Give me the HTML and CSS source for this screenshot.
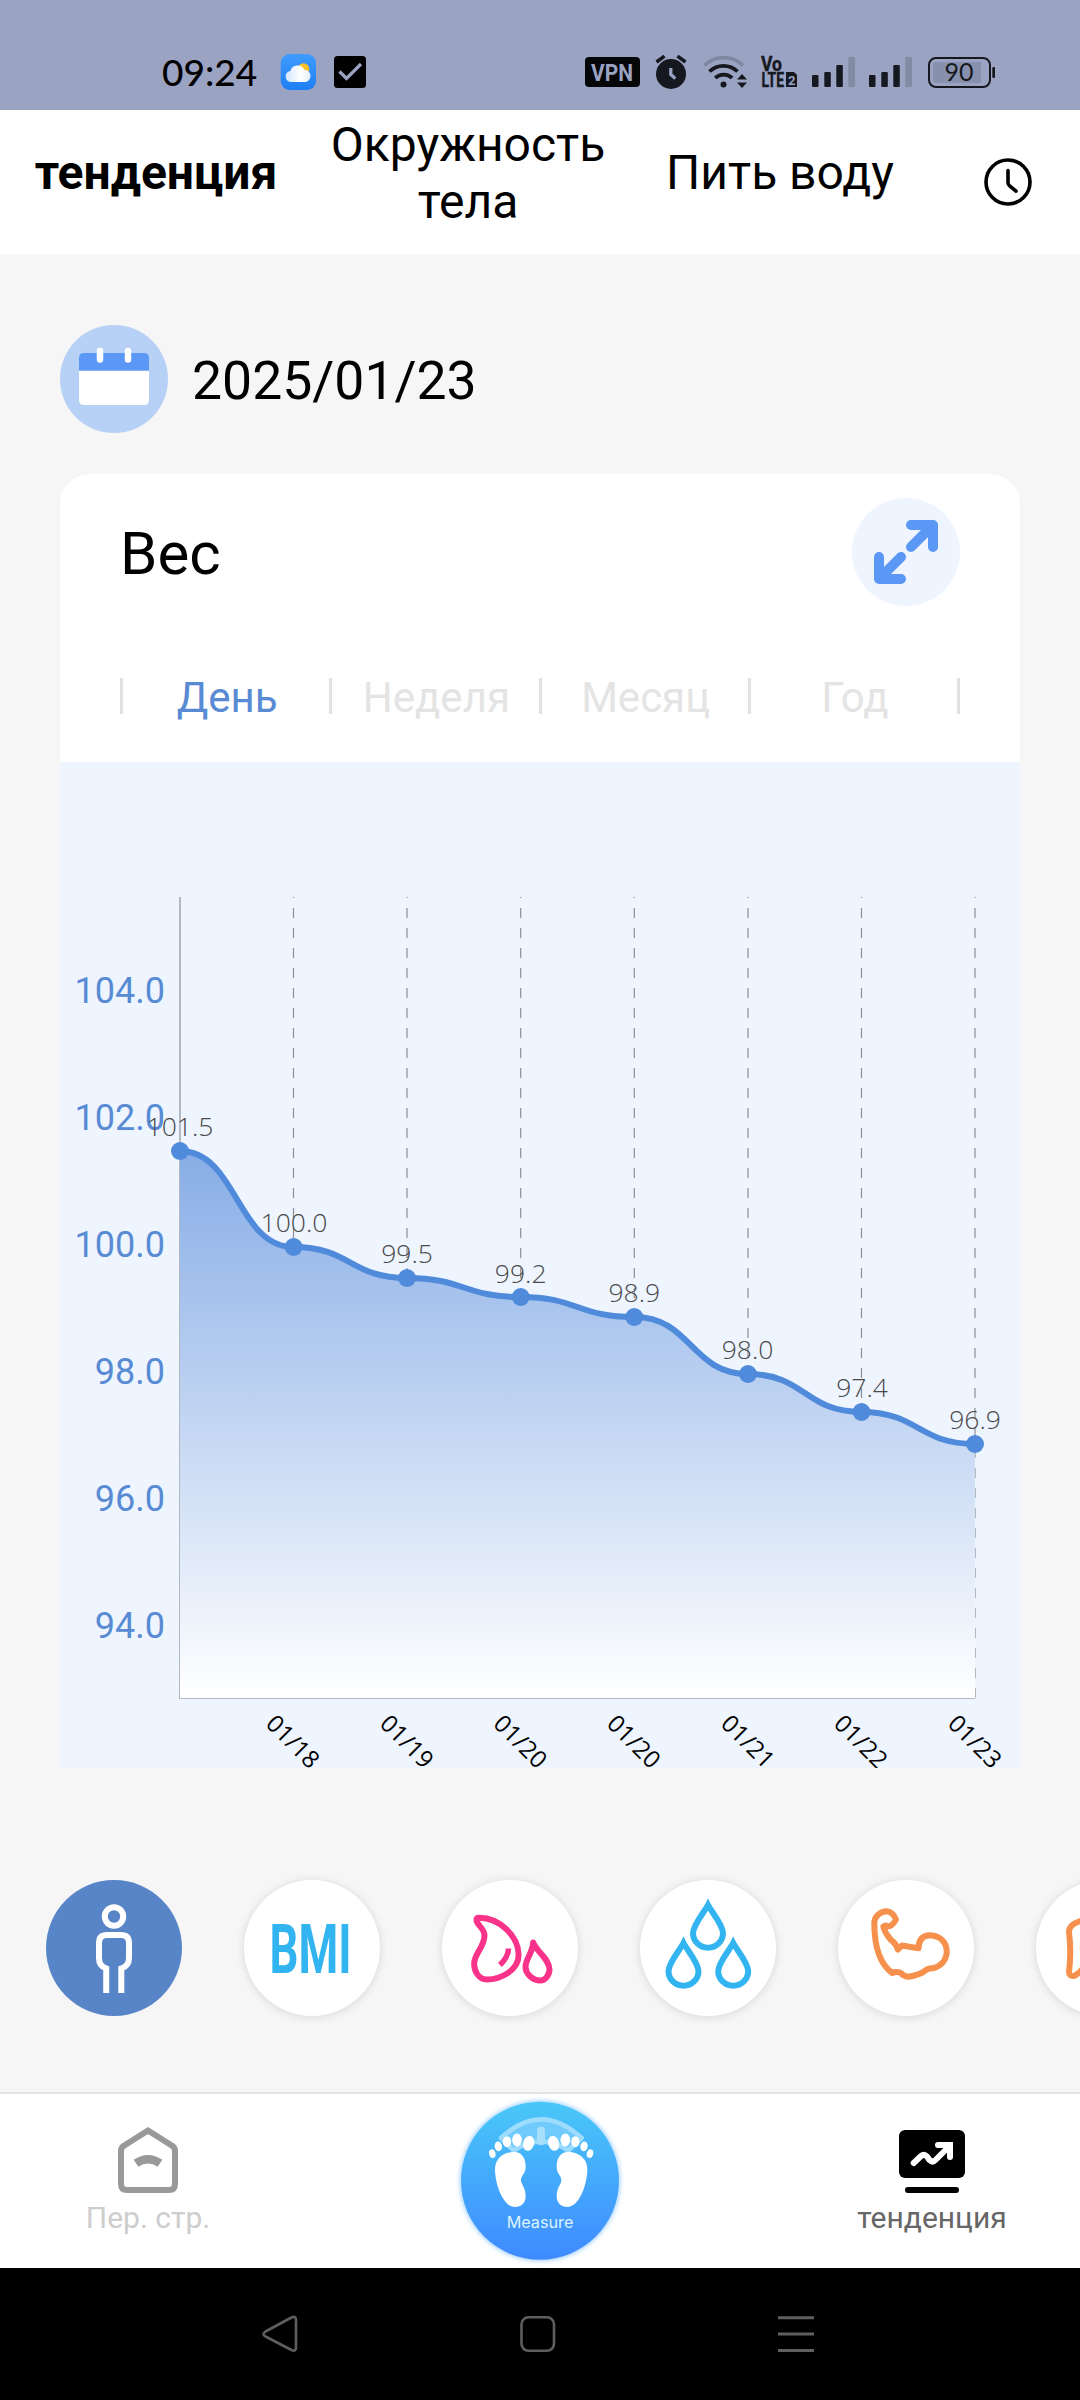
FILE: index.html
```html
<!DOCTYPE html>
<html lang="ru">
<head>
<meta charset="utf-8">
<title>тенденция</title>
<link rel="stylesheet" href="styles.css">
</head>
<body>
<header class="status">
  <span class="status-time">09:24</span>
  <svg class="status-apps" width="86" height="36" viewBox="280 54 86 36">
    <defs>
      <linearGradient id="sky" x1="0" y1="0" x2="0" y2="1"><stop offset="0" stop-color="#3f9bff"/><stop offset="1" stop-color="#1f80f5"/></linearGradient>
      <linearGradient id="cloud" x1="0" y1="0" x2="1" y2="0"><stop offset="0" stop-color="#d3e6fd"/><stop offset=".6" stop-color="#fff"/><stop offset="1" stop-color="#e6effb"/></linearGradient>
    </defs>
    <rect x="280.7" y="54" width="35.3" height="36" rx="9" fill="url(#sky)"/>
    <circle cx="303.5" cy="69" r="5.8" fill="#fbbf2b"/>
    <path d="M291 82a5.6 5.6 0 0 1-.7-11.100a7.500 7.500 0 0 1 14-1.200a6 6 0 0 1 .2 12.300Z" fill="url(#cloud)"/>
    <rect x="334" y="56" width="32" height="32" rx="3.500" fill="#000"/>
    <path d="M339.500 71.500l7 7L361 64" fill="none" stroke="#9ba3c3" stroke-width="3.200"/>
  </svg>
  <svg class="status-icons" width="412" height="40" viewBox="585 52 412 40">
    <rect x="585" y="57" width="55" height="30" rx="4" fill="#050608"/>
    <text x="591" y="80.500" class="vpn" textLength="42" lengthAdjust="spacingAndGlyphs">VPN</text>
    <g fill="#16181f">
      <circle cx="671" cy="74" r="15"/>
      <path d="M656.500 62l8-5.800M685.500 62l-8-5.800" stroke="#16181f" stroke-width="3.500"/>
      <path d="M670.800 68v6.500l4.500 4" fill="none" stroke="#9ba3c3" stroke-width="3.200"/>
      <circle cx="723.500" cy="84.500" r="3"/>
    </g>
    <g fill="none" stroke="#16181f" stroke-width="3.800">
      <path d="M704.500 65.500a27.500 27.500 0 0 1 38.500 0" stroke="#7f88a1"/>
      <path d="M709.500 71.500a20 20 0 0 1 28 0"/>
      <path d="M715.300 78a12 12 0 0 1 16.800 0"/>
    </g>
    <path d="M737 79.500l5-5.500 5 5.500ZM737 82.500l5 5.500 5-5.500Z" fill="#16181f"/>
    <text x="761" y="71" class="volte" textLength="21" lengthAdjust="spacingAndGlyphs">Vo</text>
    <text x="761.500" y="86.800" class="volte" textLength="22.500" lengthAdjust="spacingAndGlyphs">LTE</text>
    <path d="M786 72h8l3 3v12h-11Z" fill="#16181f"/>
    <text x="788" y="84.500" class="volte-num">2</text>
    <g fill="#16181f">
      <rect x="812" y="75" width="6.500" height="12" rx="1"/><rect x="824.300" y="72" width="6.500" height="15" rx="1"/><rect x="836.300" y="65" width="6.500" height="22" rx="1"/>
      <rect x="869" y="75" width="6.500" height="12" rx="1"/><rect x="881.300" y="72" width="6.500" height="15" rx="1"/><rect x="893.300" y="65" width="6.500" height="22" rx="1"/>
    </g>
    <g fill="#828ba3"><rect x="848.300" y="57" width="6.700" height="30" rx="1"/><rect x="905.300" y="57" width="6.700" height="30" rx="1"/></g>
    <rect x="929" y="58" width="61" height="29" rx="7" fill="none" stroke="#16181f" stroke-width="2"/>
    <path d="M936 62h45v21h-45a3 3 0 0 1-3-3V65a3 3 0 0 1 3-3Z" fill="#8790ad"/>
    <rect x="992.300" y="67" width="2.700" height="11" rx="1" fill="#16181f"/>
    <text x="959" y="81" class="battery" text-anchor="middle">90</text>
  </svg>
</header>

<nav class="tabs">
  <a class="tab tab-active">тенденция</a>
  <a class="tab">Окружность тела</a>
  <a class="tab">Пить воду</a>
  <svg class="history" width="50" height="50" viewBox="0 0 50 50"><circle cx="25" cy="25" r="22" fill="none" stroke="#000" stroke-width="3.600"/><path d="M25 13.500V25.500q0 2 1.700 3.500l6.300 5.200" fill="none" stroke="#000" stroke-width="3.600" stroke-linecap="round"/></svg>
</nav>

<main class="content">
  <div class="date">
    <svg width="108" height="108" viewBox="60 325 108 108">
      <circle cx="114" cy="379" r="54" fill="#b6d0f6"/>
      <path d="M84 353h60q5 0 5 5v12.500H79V358q0-5 5-5Z" fill="#5b98f5"/>
      <path d="M79 371h70v29q0 5-5 5H84q-5 0-5-5Z" fill="#fff"/>
      <path d="M100 351v8.500M128 351v8.500" stroke="#fff" stroke-width="6.500" stroke-linecap="round"/>
    </svg>
    <span class="date-text">2025/01/23</span>
  </div>

  <section class="card">
    <div class="card-head">
      <h1 class="card-title">Вес</h1>
      <svg width="108" height="108" viewBox="852 498 108 108">
        <circle cx="906" cy="552" r="54" fill="#eef5ff"/>
        <path d="M911 525h22v22M931 527l-20 20M879 557v22h22M881 577l20-20" fill="none" stroke="#5b98f5" stroke-width="10" stroke-linecap="round" stroke-linejoin="round"/>
      </svg>
    </div>
    <div class="periods">
      <a class="period period-active">День</a>
      <a class="period">Неделя</a>
      <a class="period">Месяц</a>
      <a class="period">Год</a>
    </div>
    <svg class="chart" width="960" height="1006" viewBox="60 762 960 1006">
      <defs><linearGradient id="area" gradientUnits="userSpaceOnUse" x1="0" y1="1151" x2="0" y2="1698"><stop offset="0" stop-color="#87ade6"/><stop offset="1" stop-color="#fff"/></linearGradient></defs>
      <path class="grid" d="M293.500 1698V897M407 1698V897M520.700 1698V897M634.300 1698V897M748 1698V897M861.500 1698V897M975 1698V897"/>
      <path class="axis" d="M180 897V1698"/>
      <g class="ylabels">
        <text x="165" y="1003.300">104.0</text><text x="165" y="1130.300">102.0</text><text x="165" y="1257.200">100.0</text>
        <text x="165" y="1384.200">98.0</text><text x="165" y="1511.200">96.0</text><text x="165" y="1638">94.0</text>
      </g>
      <path fill="url(#area)" d="M180 1151C236.800 1151 236.800 1247 293.600 1247S350.300 1278 407 1278S464 1297 520.700 1297S577.500 1317 634.300 1317S691 1374 748 1374S804.700 1412 861.500 1412S918.300 1444 975 1444V1698H180Z"/>
      <path class="line" d="M180 1151C236.800 1151 236.800 1247 293.600 1247S350.300 1278 407 1278S464 1297 520.700 1297S577.500 1317 634.300 1317S691 1374 748 1374S804.700 1412 861.500 1412S918.300 1444 975 1444"/>
      <path class="axis base" d="M179 1698.500H975"/>
      <g class="dots">
        <circle cx="180" cy="1151" r="9"/><circle cx="293.600" cy="1247" r="9"/><circle cx="407" cy="1278" r="9"/><circle cx="520.700" cy="1297" r="9"/>
        <circle cx="634.300" cy="1317" r="9"/><circle cx="748" cy="1374" r="9"/><circle cx="861.500" cy="1412" r="9"/><circle cx="975" cy="1444" r="9"/>
      </g>
      <g class="values">
        <text x="180" y="1136">101.5</text><text x="294" y="1232">100.0</text><text x="407" y="1263">99.5</text><text x="520.700" y="1283">99.2</text>
        <text x="634.300" y="1302">98.9</text><text x="747.500" y="1359">98.0</text><text x="862" y="1397">97.4</text><text x="975" y="1429">96.9</text>
      </g>
      <g class="xlabels">
        <text transform="translate(293 1741.500) rotate(45)" y="8.500">01/18</text>
        <text transform="translate(407 1741.500) rotate(45)" y="8.500">01/19</text>
        <text transform="translate(520.500 1741.500) rotate(45)" y="8.500">01/20</text>
        <text transform="translate(634 1741.500) rotate(45)" y="8.500">01/20</text>
        <text transform="translate(748 1741.500) rotate(45)" y="8.500">01/21</text>
        <text transform="translate(861 1741.500) rotate(45)" y="8.500">01/22</text>
        <text transform="translate(975 1741.500) rotate(45)" y="8.500">01/23</text>
      </g>
    </svg>
  </section>

  <div class="metrics">
    <div class="metric metric-active"><svg viewBox="46 1880 136 136"><g fill="none" stroke="#fff" stroke-width="6"><circle cx="114" cy="1916.500" r="9.200"/><path d="M106.200 1993V1968.500Q99 1966 99 1958V1943Q99 1935 107 1935H121Q129 1935 129 1943V1958Q129 1966 121.300 1968.500V1993"/></g></svg></div>
    <div class="metric"><svg viewBox="244 1880 136 136"><text class="bmi" x="269.500" y="1973" textLength="82" lengthAdjust="spacingAndGlyphs">BMI</text></svg></div>
    <div class="metric"><svg viewBox="442 1880 136 136"><g fill="none" stroke="#f9338a" stroke-width="6" stroke-linejoin="round"><path d="M479 1917.700C499 1917.500 518.600 1936 518.600 1955C518.600 1970 501 1979.500 487 1979.500C478 1979.500 473.500 1970 474.300 1962C475.500 1953 484.500 1946 484.500 1935.500C484.500 1928 476.500 1925 476.500 1920Q476.500 1917.700 479 1917.700Z"/><path d="M508.500 1948.500Q508.500 1956.500 500 1965" stroke-width="5.500"/><path d="M533.200 1942.500C536 1951 549.500 1959 549.500 1969.500C549.500 1975 545 1980.500 540.500 1980.500C532.500 1980.500 525.500 1973.500 525.500 1967C525.500 1959 532.500 1953.500 533.200 1942.500Z"/></g></svg></div>
    <div class="metric"><svg viewBox="640 1880 136 136"><g fill="none" stroke="#32b4f1" stroke-width="6"><path id="drop" d="M708 1905C705 1911 693 1925 693 1933A15 14.800 0 0 0 723 1933C723 1925 711 1911 708 1905Z"/><use href="#drop" x="-24.500" y="38"/><use href="#drop" x="25.200" y="38"/></g></svg></div>
    <div class="metric"><svg viewBox="838 1880 136 136"><path fill="none" stroke="#f5914d" stroke-width="6" stroke-linejoin="round" stroke-linecap="round" d="M886.700 1911.300C881 1911.300 874.300 1916 874.300 1923C874.300 1942 878.500 1963 892.300 1973Q896 1971 900.500 1972.700Q903.500 1976.500 908.500 1976.800Q919 1975 924.500 1971.300Q927.500 1968 933 1968.300C941 1966.500 946.700 1960 946.700 1951.500C946.700 1942 940 1935.300 928.500 1935.300Q918.500 1937 918.500 1948.300L902 1945.500L897.800 1949.500Q896.500 1944 890.500 1939.500Q885 1933 883.300 1926.500L885.500 1925.500Q891.500 1928.500 896 1919.500Q893 1912 886.700 1911.300Z"/></svg></div>
    <div class="metric"><svg viewBox="1036 1880 136 136"><path fill="none" stroke="#f5914d" stroke-width="6" stroke-linejoin="round" d="M1082 1920.500Q1069 1924 1069 1932Q1071.500 1952 1069 1972Q1069 1976.500 1074 1976Q1079 1974 1084 1967"/><path d="M1079 1948l4-1v3Z" fill="#f5914d"/></svg></div>
  </div>
</main>

<nav class="bottom">
  <a class="bottom-item">
    <svg width="66" height="70" viewBox="115 2125 66 70"><path d="M148 2130.500L172.500 2146Q175 2147.700 175 2151V2184Q175 2190 169 2190H127Q121 2190 121 2184V2151Q121 2147.700 123.500 2146Z" fill="none" stroke="#999" stroke-width="6"/><path d="M136 2163.300Q148 2155.200 160 2163.300" fill="none" stroke="#999" stroke-width="8.500"/></svg>
    <span class="bottom-label muted">Пер. стр.</span>
  </a>
  <a class="measure">
    <svg width="200" height="174" viewBox="0 42 600 522">
      <defs>
        <linearGradient id="ball" x1="0" y1="0" x2="0" y2="1"><stop offset="0" stop-color="#49c8f8"/><stop offset="1" stop-color="#3f8aff"/></linearGradient>
        <filter id="glow"><feGaussianBlur stdDeviation="6"/></filter>
      </defs>
      <circle cx="300" cy="302" r="241" fill="#a5d3ff" filter="url(#glow)"/>
      <circle cx="300" cy="302" r="237" fill="url(#ball)"/>
      <path d="M183 174Q303 62 425 174L385 212Q303 166 221 212Z" fill="#70cafc"/>
      <path d="M183 174Q303 62 425 174L385 212Q303 158 221 212Z" fill="none" stroke="#9ddcfc" stroke-width="14" stroke-linejoin="round"/>
      <path d="M303 152V184" stroke="#a8e0fc" stroke-width="24" stroke-linecap="round"/>
      <g fill="#fff">
        <g id="foot"><path d="M222 216C250 216 257 240 257 262C257 280 243 288 243 300C243 314 257 322 257 348C257 370 243 381 225 381C188 381 165 310 165 268C165 236 190 216 222 216Z"/>
        <ellipse cx="157" cy="221" rx="9.500" ry="13" transform="rotate(-15 157 221)"/><ellipse cx="175" cy="199" rx="11" ry="14.500" transform="rotate(-10 175 199)"/><ellipse cx="201" cy="185" rx="12.500" ry="16.500"/><ellipse cx="231" cy="180" rx="14.500" ry="19.500"/><ellipse cx="266" cy="190" rx="16.500" ry="22.500" transform="rotate(15 266 190)"/></g>
        <use href="#foot" transform="translate(607 0) scale(-1 1)"/>
      </g>
      <text x="300" y="443" text-anchor="middle" class="measure-text" textLength="200" lengthAdjust="spacingAndGlyphs">Measure</text>
    </svg>
  </a>
  <a class="bottom-item">
    <svg width="66" height="70" viewBox="899 2125 66 70"><rect x="899" y="2130" width="66" height="48" rx="6"/><rect x="905" y="2187" width="54" height="6" rx="3"/><path d="M913.700 2163L921 2156Q924 2153.500 927 2156.500L929.500 2160Q932.500 2163 935.500 2160L949 2146.500M938 2145H950V2157" fill="none" stroke="#fff" stroke-width="6" stroke-linecap="round" stroke-linejoin="miter"/></svg>
    <span class="bottom-label">тенденция</span>
  </a>
</nav>

<footer class="system">
  <svg width="1080" height="132" viewBox="0 2268 1080 132"><g fill="none" stroke="#5e5e5e" stroke-width="2.600" stroke-linejoin="round"><path d="M265.500 2331.500L291.500 2317.500Q296 2315.500 296 2320V2347.500Q296 2352 291.500 2350L265.500 2336.500Q261.500 2334 265.500 2331.500Z"/><rect x="521.500" y="2317.300" width="32.500" height="33.500" rx="7"/><path d="M778 2317.700H814M778 2334H814M778 2350.400H814" stroke-width="3"/></g></svg>
</footer>
</body>
</html>
```
FILE: styles.css
```css
* { box-sizing: border-box; }
body { margin: 0; width: 1080px; height: 2400px; overflow: hidden; display: flex; flex-direction: column; background: #f6f6f6; color: #000; font-family: Roboto, sans-serif; }
svg { display: block; flex: none; }

.status { height: 110px; flex: none; display: flex; align-items: center; padding: 34px 83px 0 162px; background: #9ba3c3; }
.status-time { width: 118px; font: 500 37px/40px Lato, sans-serif; }
.status-icons { margin-left: auto; }
.vpn { font: 700 23px Roboto, sans-serif; fill: #9ba3c3; }
.volte { font: 700 19.500px Roboto, sans-serif; fill: #16181f; stroke: #16181f; stroke-width: .4; }
.volte-num { font: 700 13px Roboto, sans-serif; fill: #9ba3c3; }
.battery { font: 400 25px Lato, sans-serif; fill: #16181f; }

.tabs { height: 144px; flex: none; display: grid; grid-template-columns: 312px 312px 312px 144px; background: #fff; }
.tab { height: 124px; display: flex; align-items: center; justify-content: center; text-align: center; font-size: 48px; line-height: 57px; padding-top: 1px; }
.tab-active { font-weight: 700; }
.history { place-self: center; }

.content { flex: 1; display: flex; flex-direction: column; padding: 71px 0 0 60px; min-height: 0; overflow: hidden; }
.date { display: flex; align-items: center; gap: 24px; }
.date-text { font-size: 53.500px; line-height: 60px; padding-top: 3px; }

.card { width: 960px; margin-top: 41px; border-radius: 30px 30px 0 0; background: #fff; overflow: hidden; flex: none; }
.card-head { height: 132px; display: flex; align-items: center; justify-content: space-between; padding: 24px 60px 0; }
.card-title { margin: 0; padding-top: 3px; font-size: 60px; line-height: 70px; font-weight: 400; }
.periods { display: flex; margin: 72px 60px 48px; height: 36px; border-left: 3px solid #e2e2e2; }
.period { flex: 1; display: flex; align-items: center; justify-content: center; padding: 4px 0 0 2px; border-right: 3px solid #e2e2e2; font-size: 42px; line-height: 36px; color: #e4e4e4; }
.period-active { color: #588bd3; }

.chart { background: #eef5ff; }
.grid { stroke: #8c8f96; stroke-width: 1.200; stroke-dasharray: 10 10; fill: none; }
.axis { stroke: #b4b8c0; stroke-width: 2; fill: none; }
.base { stroke-width: 1; }
.line { stroke: #4f8adb; stroke-width: 6; fill: none; }
.dots { fill: #4f8adb; }
.ylabels { font-size: 36px; fill: #588bd3; text-anchor: end; }
.values { font: 300 26.500px "Open Sans", sans-serif; fill: #4a4a4a; text-anchor: middle; }
.xlabels { font: 400 24px "Open Sans", sans-serif; fill: #000; text-anchor: middle; }

.metrics { display: flex; gap: 62px; margin: 112px 0 0 -14px; }
.metric { width: 136px; height: 136px; flex: none; border-radius: 50%; background: #fff; box-shadow: 0 1px 10px rgba(0, 0, 0, .13); }
.metric-active { background: #5785c8; box-shadow: none; }
.bmi { font: 700 69px Roboto, sans-serif; fill: #32b4f1; }

.bottom { height: 176px; flex: none; display: flex; justify-content: space-between; border-top: 2px solid #e5e5e5; background: #fff; }
.bottom-item { width: 296px; display: flex; flex-direction: column; align-items: center; padding-top: 31px; }
.bottom-label { margin-top: 5px; font-size: 30px; line-height: 36px; color: #666; }
.muted { color: #cdcdcd; }
.measure-text { font: 400 49px Inter, sans-serif; fill: #dcf3ff; }

.system { height: 132px; flex: none; background: #000; }
```
